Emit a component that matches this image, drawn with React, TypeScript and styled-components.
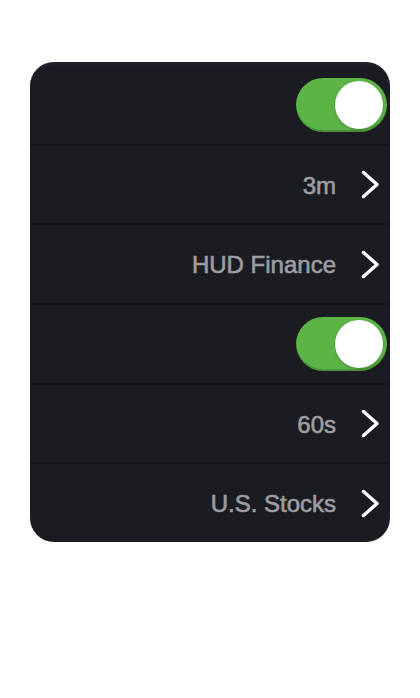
import React from "react";
import styled, { createGlobalStyle } from "styled-components";

const GlobalStyle = createGlobalStyle`
  html, body {
    margin: 0;
    padding: 0;
    background: #ffffff;
  }
  body {
    font-family: "Liberation Sans", Arial, sans-serif;
  }
`;

const Page = styled.div`
  padding: 62px 30px 0 30px;
`;

const Card = styled.div`
  width: 360px;
  height: 480px;
  box-sizing: border-box;
  background: #1b1c21;
  border-radius: 24px;
  border-top: 4px solid #1f2029;
  overflow: hidden;
  display: flex;
  flex-direction: column;
`;

const Row = styled.div<{ $toggle?: boolean }>`
  flex: 1;
  display: flex;
  align-items: center;
  justify-content: flex-end;
  gap: 25px;
  padding-right: ${(p) => (p.$toggle ? "3px" : "10px")};
  & + & {
    border-top: 2px solid #131418;
  }
`;

const Value = styled.span`
  font-family: "Liberation Sans", Arial, sans-serif;
  font-size: 24px;
  color: #9d9da2;
  -webkit-text-stroke: 0.6px #9d9da2;
  line-height: 1;
  margin-top: 2px;
`;

const Switch = styled.div`
  position: relative;
  width: 91px;
  height: 54px;
  border-radius: 27px;
  background: #5cb346;
  box-shadow: inset 0 -2px 0 rgba(0, 0, 0, 0.18);
`;

const Knob = styled.div`
  position: absolute;
  top: 3px;
  right: 4px;
  width: 48px;
  height: 48px;
  border-radius: 50%;
  background: #ffffff;
  box-shadow: 0 1px 2px rgba(0, 0, 0, 0.25);
`;

const Chevron = () => (
  <svg width="19" height="29" viewBox="0 0 19 29" fill="none">
    <polyline
      points="2.5,2.5 16,14.5 2.5,26.5"
      stroke="#ffffff"
      strokeWidth="3.4"
      strokeLinecap="round"
      strokeLinejoin="round"
    />
  </svg>
);

type Item = { kind: "toggle" } | { kind: "link"; value: string };

const items: Item[] = [
  { kind: "toggle" },
  { kind: "link", value: "3m" },
  { kind: "link", value: "HUD Finance" },
  { kind: "toggle" },
  { kind: "link", value: "60s" },
  { kind: "link", value: "U.S. Stocks" },
];

export default function App() {
  return (
    <>
      <GlobalStyle />
      <Page>
        <Card>
          {items.map((it, i) =>
            it.kind === "toggle" ? (
              <Row key={i} $toggle>
                <Switch>
                  <Knob />
                </Switch>
              </Row>
            ) : (
              <Row key={i}>
                <Value>{it.value}</Value>
                <Chevron />
              </Row>
            )
          )}
        </Card>
      </Page>
    </>
  );
}
